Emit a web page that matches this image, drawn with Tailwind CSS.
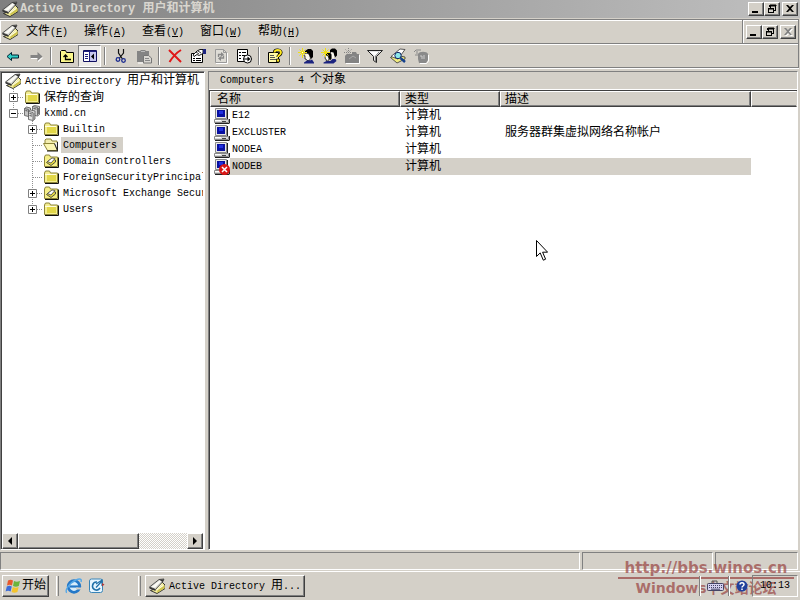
<!DOCTYPE html>
<html lang="zh-CN">
<head>
<meta charset="utf-8">
<meta name="viewport" content="width=device-width, initial-scale=1">
<title>Active Directory 用户和计算机</title>
<script src="https://cdn.jsdelivr.net/npm/@tailwindcss/browser@4"></script>
</head>
<body class="font-['Liberation_Mono','Noto_Sans_CJK_SC',monospace] text-[10px] leading-4 text-black bg-[#d4d0c8]">

<!-- Icon definitions -->
<svg class="hidden" aria-hidden="true">
  <symbol id="i-book" viewBox="0 0 16 16">
    <path d="M6 11L13 4l3 3v3.500L8 15.500 1.500 12.500z" fill="#f2ec9c" stroke="#222" stroke-width=".9"/>
    <path d="M8 15l7.500-4.700V7.500L8.500 12z" fill="#cfc550"/>
    <path d="M6.500 11.500l6-5M8 12l6-4.500" stroke="#fff" stroke-width=".8"/>
    <path d="M.5 9L10 1.500l5-.5-1.500 3-7 7.500z" fill="#d6d6d0" stroke="#444" stroke-width=".9"/>
    <path d="M2.500 8.700L10.500 2.500l2 .5L6 9.800z" fill="#fbfbf6"/>
    <path d="M.5 9l6 2.500v1.500L.5 10.500z" fill="#333"/><path d="M10 1.500h5l-1.500 2.500z" fill="#333"/>
  </symbol>
  <symbol id="i-folder" viewBox="0 0 16 16">
    <path d="M1.500 4l1-2h4l1 2h7v9.500h-13z" fill="#f4ee90" stroke="#8c8438"/>
    <path d="M2 5.500h11" stroke="#fffde0"/><path d="M4 6h9v6H4z" fill="#e2d748"/>
    <path d="M15.500 4.500v10H2" fill="none" stroke="#111"/>
  </symbol>
  <symbol id="i-open" viewBox="0 0 16 16">
    <path d="M2 7V3l1-1h5l1 2h5v9" fill="#f4eeb0" stroke="#8c8438"/>
    <path d="M0.500 6.500h11l3 7h-10z" fill="#fbf6b4" stroke="#8c8438"/>
    <path d="M11.500 6.500l3 7V5" fill="#eee" stroke="#222"/><path d="M4 14h11" stroke="#111"/>
  </symbol>
  <symbol id="i-ou" viewBox="0 0 16 16">
    <path d="M1.500 4l1-2h4l1 2h7v9.500h-13z" fill="#f6ef86" stroke="#8c8438"/>
    <path d="M15.500 4.500v10H2" fill="none" stroke="#111"/>
    <path d="M3.500 9.500L8 6l4.500 1v2L8 12.500z" fill="#e4d840" stroke="#444" stroke-width=".9"/>
    <path d="M4.500 8.500L9 5l3 .5L8 10z" fill="#fff" stroke="#444" stroke-width=".8"/>
  </symbol>
  <symbol id="i-domain" viewBox="0 0 16 16">
    <g stroke="#555" stroke-width=".8">
      <path d="M0.500 3.500l2-1.500 4 1v7l-2 1.500-4-1z" fill="#c4c4c4"/><path d="M0.500 3.500l4 1v7" fill="none"/>
      <path d="M8.500 1.500l2-1 5 1v8l-2 1.500-5-1z" fill="#d0d0d0"/><path d="M8.500 1.500l5 1v8" fill="none"/>
      <path d="M4.500 6.500l2-1.500 4.500 1v8l-2 1.500-4.500-1z" fill="#e2e2e2"/><path d="M4.500 6.500L9 7.500v8" fill="none"/>
    </g>
    <path d="M5.500 8.500l2.500.6M5.500 10.500l2.500.6M1.500 5.500l2 .5M9.500 3.500l3 .6" stroke="#333" stroke-width=".8"/>
    <path d="M14.500 3v6M10 8v6" stroke="#777"/>
  </symbol>
  <symbol id="i-pc" viewBox="0 0 16 16">
    <path d="M1.500 .5h11v10h-11z" fill="#e8e8e8" stroke="#8a8a8a"/>
    <path d="M3 2h8v7H3z" fill="#0810a0"/><path d="M5 3h4v3H5z" fill="#2030e0"/>
    <path d="M13.500 1v10" stroke="#222"/>
    <path d="M.5 11.500h14v3H.5z" fill="#d8d8d8" stroke="#8a8a8a"/><path d="M1 12.500h6" stroke="#fff"/>
    <path d="M15.500 11v4.500M1 15.500h14" stroke="#222" fill="none"/>
    <path d="M8 13.500h4" stroke="#444"/>
  </symbol>
  <symbol id="i-pcx" viewBox="0 0 16 16">
    <use href="#i-pc"/>
    <circle cx="10.500" cy="10.500" r="5.500" fill="#d81818"/><path d="M8 8l5 5M13 8l-5 5" stroke="#fff" stroke-width="1.500"/>
  </symbol>
  <symbol id="t-plus" viewBox="0 0 19 16">
    <path d="M9.500 0v16M10 8.500h9" stroke="#909090" stroke-dasharray="1 1"/>
    <path d="M5.500 4.500h8v8h-8z" fill="#fff" stroke="#808080"/><path d="M7 8.500h5M9.500 6v5" stroke="#000"/>
  </symbol>
  <symbol id="t-end" viewBox="0 0 19 16">
    <path d="M9.500 0v8M10 8.500h9" stroke="#909090" stroke-dasharray="1 1"/>
    <path d="M5.500 4.500h8v8h-8z" fill="#fff" stroke="#808080"/><path d="M7 8.500h5M9.500 6v5" stroke="#000"/>
  </symbol>
  <symbol id="t-minus" viewBox="0 0 19 16">
    <path d="M9.500 0v8M10 8.500h9" stroke="#909090" stroke-dasharray="1 1"/>
    <path d="M5.500 4.500h8v8h-8z" fill="#fff" stroke="#808080"/><path d="M7 8.500h5" stroke="#000"/>
  </symbol>
  <symbol id="t-line" viewBox="0 0 19 16"><path d="M9.500 0v16M10 8.500h9" stroke="#909090" stroke-dasharray="1 1"/></symbol>
  <symbol id="w-min" viewBox="0 0 12 10"><path d="M2 7h6v2H2z"/></symbol>
  <symbol id="w-restore" viewBox="0 0 12 10"><path d="M4 1.500h5M4.500 1v3M3.500 1v2M9.500 1v5M8 6.500h2M2 4.500h6M2 5h6M2.500 4v5M7.500 4v5M2 8.500h6M4 1h6v1H4z" fill="none" stroke="currentColor"/></symbol>
  <symbol id="w-close" viewBox="0 0 12 10"><path d="M2 1h2l2 2 2-2h2L7 4.500 10 8H8L6 6 4 8H2l3-3.500z"/></symbol>
</svg>

<div class="min-h-screen flex flex-col">

  <!-- Title bar -->
  <header class="h-[18px] flex items-center pl-0.5 pr-0.5 bg-linear-to-r from-[#808080] to-[#c0c0c0]">
    <svg class="size-4 shrink-0"><use href="#i-book"/></svg>
    <h1 class="flex-1 ml-0.5 text-[12px] font-bold text-[#d9d6cf] whitespace-pre">Active Directory 用户和计算机</h1>
    <div class="flex">
      <button aria-label="最小化" class="w-4 h-3.5 flex items-center justify-center bg-[#d4d0c8] border border-t-white border-l-white border-r-[#404040] border-b-[#404040] shadow-[inset_-1px_-1px_0_#808080]"><svg class="w-3 h-2.5"><use href="#w-min"/></svg></button>
      <button aria-label="还原" class="w-4 h-3.5 flex items-center justify-center bg-[#d4d0c8] border border-t-white border-l-white border-r-[#404040] border-b-[#404040] shadow-[inset_-1px_-1px_0_#808080]"><svg class="w-3 h-2.5"><use href="#w-restore"/></svg></button>
      <button aria-label="关闭" class="w-4 h-3.5 ml-0.5 flex items-center justify-center bg-[#d4d0c8] border border-t-white border-l-white border-r-[#404040] border-b-[#404040] shadow-[inset_-1px_-1px_0_#808080]"><svg class="w-3 h-2.5"><use href="#w-close"/></svg></button>
    </div>
  </header>

  <!-- Menu bar -->
  <div class="mt-px h-[25px] mr-px flex border-t border-b border-r border-[#808080] shadow-[inset_0_1px_0_#fff,inset_1px_0_0_#fff]">
    <nav class="flex-1 flex items-center pl-0.5">
      <svg class="size-4 shrink-0"><use href="#i-book"/></svg>
      <button class="w-[58px] pt-0.5 whitespace-nowrap"><span class="text-xs leading-4">文件</span>(<u>F</u>)</button>
      <button class="w-[58px] pt-0.5 whitespace-nowrap"><span class="text-xs leading-4">操作</span>(<u>A</u>)</button>
      <button class="w-[58px] pt-0.5 whitespace-nowrap"><span class="text-xs leading-4">查看</span>(<u>V</u>)</button>
      <button class="w-[58px] pt-0.5 whitespace-nowrap"><span class="text-xs leading-4">窗口</span>(<u>W</u>)</button>
      <button class="w-[58px] pt-0.5 whitespace-nowrap"><span class="text-xs leading-4">帮助</span>(<u>H</u>)</button>
    </nav>
    <div class="flex items-center border-l border-[#808080] shadow-[inset_1px_0_0_#fff] pl-[3px] pr-0.5">
      <button aria-label="最小化子窗口" class="w-4 h-3.5 flex items-center justify-center bg-[#d4d0c8] border border-t-white border-l-white border-r-[#404040] border-b-[#404040] shadow-[inset_-1px_-1px_0_#808080]"><svg class="w-3 h-2.5"><use href="#w-min"/></svg></button>
      <button aria-label="还原子窗口" class="w-4 h-3.5 flex items-center justify-center bg-[#d4d0c8] border border-t-white border-l-white border-r-[#404040] border-b-[#404040] shadow-[inset_-1px_-1px_0_#808080]"><svg class="w-3 h-2.5"><use href="#w-restore"/></svg></button>
      <button disabled aria-label="关闭子窗口" class="w-4 h-3.5 ml-0.5 flex items-center justify-center bg-[#d4d0c8] border border-t-white border-l-white border-r-[#404040] border-b-[#404040] shadow-[inset_-1px_-1px_0_#808080]"><svg class="w-3 h-2.5 fill-[#808080] drop-shadow-[1px_1px_0_#fff]"><use href="#w-close"/></svg></button>
    </div>
  </div>

  <!-- Toolbar -->
  <div class="h-6 mr-px flex items-center pl-px border-b border-r border-[#808080] shadow-[inset_0_1px_0_#fff,0_1px_0_#fff]">
    <button aria-label="后退" class="w-[23px] h-[22px] flex items-center justify-center"><svg class="size-4" viewBox="0 0 16 16"><path d="M2 8.500L6.500 4.500v2.500h7v3h-7v2.500z" fill="#30d0c8" stroke="#023"/></svg></button>
    <button aria-label="前进" class="w-[23px] h-[22px] flex items-center justify-center"><svg class="size-4" viewBox="0 0 16 16"><path d="M15.500 9.500L10 14v-3H3v-1h7z" fill="#fff"/><path d="M14.500 8.500L9.500 4v3h-7v3h7v3z" fill="#848484"/></svg></button>
    <span class="w-2 h-[18px] flex justify-center"><span class="w-0.5 border-l border-[#808080] bg-white"></span></span>
    <button aria-label="上一级" class="w-[23px] h-[22px] flex items-center justify-center"><svg class="size-4" viewBox="0 0 16 16"><path d="M1.500 14.500v-11l1-1h4l1 2h7v10z" fill="#fbf78c" stroke="#000"/><path d="M6.500 7v4.500H12M4.500 9L6.500 7l2 2" fill="none" stroke="#000" stroke-width="1.300"/></svg></button>
    <button aria-label="显示控制台树" aria-pressed="true" class="w-[23px] h-[22px] flex items-center justify-center bg-[#edebe8] border border-t-[#808080] border-l-[#808080] border-r-white border-b-white"><svg class="size-4" viewBox="0 0 16 16"><path d="M1.500 2.500h13v11h-13z" fill="#fff" stroke="#101060"/><path d="M2 3h12v1H2z" fill="#202080"/><path d="M8 4h6v9H8z" fill="#c6c6ee"/><path d="M7.500 3v10" stroke="#202080"/><path d="M3 6.500h3M3 8.500h3M3 10.500h3" stroke="#202080"/><path d="M12 5.500v6l-3-3z" fill="#000"/></svg></button>
    <span class="w-2 h-[18px] flex justify-center"><span class="w-0.5 border-l border-[#808080] bg-white"></span></span>
    <button aria-label="剪切" class="w-[23px] h-[22px] flex items-center justify-center"><svg class="size-4" viewBox="0 0 16 16"><path d="M5.500 1v4l4 6M10.500 1v4l-4 5" fill="none" stroke="#111" stroke-width="1.200"/><circle cx="5" cy="11.500" r="1.800" fill="none" stroke="#1c2c90" stroke-width="1.300"/><circle cx="10.500" cy="12.500" r="1.800" fill="none" stroke="#1c2c90" stroke-width="1.300"/></svg></button>
    <button aria-label="粘贴" class="w-[23px] h-[22px] flex items-center justify-center"><svg class="size-4" viewBox="0 0 16 16"><path d="M1 3h3l1-1h4l1 1h3v11H1z" fill="#848484"/><path d="M5 3.500h4" stroke="#bbb"/><path d="M7.500 7.500h5l3 2.500v5h-8z" fill="#d9d7d2" stroke="#777"/><path d="M9 10.500h4M9 12.500h5" stroke="#888"/><path d="M2 15h5" stroke="#fff"/></svg></button>
    <span class="w-2 h-[18px] flex justify-center"><span class="w-0.5 border-l border-[#808080] bg-white"></span></span>
    <button aria-label="删除" class="w-[23px] h-[22px] flex items-center justify-center"><svg class="size-4" viewBox="0 0 16 16"><path d="M2 2c3 3 7 7 12 12M14 2C9 5 5 10 2.500 14" fill="none" stroke="#e01818" stroke-width="2"/></svg></button>
    <button aria-label="属性" class="w-[23px] h-[22px] flex items-center justify-center"><svg class="size-4" viewBox="0 0 16 16"><path d="M1.500 5.500h11v9h-11z" fill="#fff" stroke="#000"/><path d="M3 10.500h2M6 10.500h5M3 12.500h2M6 12.500h5" stroke="#000"/><path d="M3 7l4-4 3-1.500h3v4l-4 2-2-1-3 2z" fill="#fff" stroke="#000" stroke-width=".9"/><path d="M6 4l3 2M8 3l3 2" stroke="#000" stroke-width=".8"/><path d="M13 1h3v5h-3z" fill="#1c2480"/></svg></button>
    <button aria-label="刷新" disabled class="w-[23px] h-[22px] flex items-center justify-center"><svg class="size-4" viewBox="0 0 16 16"><path d="M2.500 1.500h8l3 3v10h-11z" fill="#dedcd6" stroke="#999"/><path d="M10.500 1.500v3h3" fill="none" stroke="#999"/><path d="M5.500 9V6.500H9M10.500 7.500V10H7" fill="none" stroke="#888" stroke-width="1.300"/><path d="M8 4l3 2.500L8 9zM8 8v5l-3-2.500z" fill="#888"/><path d="M14.500 5v10.500H3" fill="none" stroke="#fff"/></svg></button>
    <button aria-label="导出列表" class="w-[23px] h-[22px] flex items-center justify-center"><svg class="size-4" viewBox="0 0 16 16"><path d="M1.500 1.500h10v12h-10z" fill="#fff" stroke="#000"/><path d="M3 4.500h2M6 4.500h4M3 7.500h2M6 7.500h4M3 10.500h2" stroke="#000"/><circle cx="11.500" cy="11" r="4" fill="#fff" stroke="#000"/><path d="M8 10.500h3.500V8.500l3 2.500-3 2.500v-2H8z" fill="#000"/></svg></button>
    <span class="w-2 h-[18px] flex justify-center"><span class="w-0.5 border-l border-[#808080] bg-white"></span></span>
    <button aria-label="帮助主题" class="w-[23px] h-[22px] flex items-center justify-center"><svg class="size-4" viewBox="0 0 16 16"><path d="M1.500 4.500h10v10h-10z" fill="#fff9a8" stroke="#000"/><path d="M3 7.500h4M3 9.500h5M3 11.500h6" stroke="#555"/><path d="M7.500 4.500C7.500 2.500 9 2 10.500 2s3.500.8 3.500 2.500c0 2.500-3 2.500-3 4.500" fill="none" stroke="#000" stroke-width="3.200"/><path d="M7.500 4.500C7.500 2.500 9 2 10.500 2s3.500.8 3.500 2.500c0 2.500-3 2.500-3 4.500" fill="none" stroke="#ffe81c" stroke-width="1.800"/><path d="M9.500 11h3v3h-3z" fill="#ffe81c" stroke="#000" stroke-width=".8"/></svg></button>
    <span class="w-2 h-[18px] flex justify-center"><span class="w-0.5 border-l border-[#808080] bg-white"></span></span>
    <button aria-label="新建用户" class="w-[23px] h-[22px] flex items-center justify-center"><svg class="size-4" viewBox="0 0 16 16"><path d="M7 3l3-2h3l2 2v6l-2 2-3-5-3-1z" fill="#000"/><path d="M7.500 5l3 .5 1 2 1 2.500-1 2.500H9l-1-1.500H7V8l-1-.5z" fill="#faf8ee" stroke="#000" stroke-width=".7"/><path d="M6 15.500v-1l3-2h3l2-1 2 3v1z" fill="#1c2480"/><path d="M4.500 0v10M0 4.500h9M1.500 1.500l6 6M7.500 1.500l-6 6" stroke="#f0e010"/><path d="M4 4h1v1H4z" fill="#fff"/></svg></button>
    <button aria-label="新建组" class="w-[23px] h-[22px] flex items-center justify-center"><svg class="size-4" viewBox="0 0 16 16"><path d="M9 2l2-1.500h3l2 2v5l-2 2-2-4-3-1z" fill="#000"/><path d="M10 4l2.500.5 1 4-1 2H11z" fill="#faf8ee"/><path d="M4 6l2-1.500h3l1.500 2v4l-1.500 2-2-4-3-1z" fill="#000"/><path d="M4.500 7l2.500.5 1 3.500-1 2H5.500l-.5-2-1-.5z" fill="#faf8ee" stroke="#000" stroke-width=".7"/><path d="M2.500 15.500v-1l3-1.500h4l2-2h3l1 2-3 2.500z" fill="#1c2480"/><path d="M4.500 0v9M0 4.500h9M1.500 1.500l6 6M7.500 1.500l-6 6" stroke="#f0e010"/></svg></button>
    <button aria-label="新建组织单位" disabled class="w-[23px] h-[22px] flex items-center justify-center"><svg class="size-4" viewBox="0 0 16 16"><path d="M3 6h5V4h4l1 2h2v9H1V8z" fill="#848484"/><path d="M4.500 0v9M0 4.500h8M1.500 1.500l6 6M7.500 1.500l-6 6" stroke="#848484" stroke-dasharray="1 1"/><path d="M5 11l4-3 3 2" fill="none" stroke="#aaa"/><path d="M15.500 7v8.500H2" fill="none" stroke="#fff"/></svg></button>
    <button aria-label="筛选器" class="w-[23px] h-[22px] flex items-center justify-center"><svg class="size-4" viewBox="0 0 16 16"><path d="M.5 2.500h15l-6 6v6l-3-2v-4z" fill="#e4e4e4" stroke="#222"/><path d="M3 4h9L8 8z" fill="#fff"/><path d="M12 4L8.500 8v5" fill="none" stroke="#888"/></svg></button>
    <button aria-label="查找" class="w-[23px] h-[22px] flex items-center justify-center"><svg class="size-4" viewBox="0 0 16 16"><path d="M0.500 9.500L5 7l10 2v2l-8 4z" fill="#f0ea80" stroke="#333" stroke-width=".8"/><path d="M1 8.500L10 1l5 .5L8 11z" fill="#fff" stroke="#333" stroke-width=".8"/><circle cx="8" cy="7.500" r="3.200" fill="#8ce8e8" stroke="#126"/><path d="M10.500 10l4.500 4" stroke="#14418c" stroke-width="2.500"/></svg></button>
    <button aria-label="添加到组" disabled class="w-[23px] h-[22px] flex items-center justify-center"><svg class="size-4" viewBox="0 0 16 16"><path d="M5 6c1-3 9-3 10 0v6l-2 3H6l-1-4z" fill="#8a8a8a"/><path d="M1 4l2-2h5M4 6V3M2 7h3" fill="none" stroke="#8a8a8a"/><path d="M7 8h2v3M11 7v4" fill="none" stroke="#ccc"/><path d="M15.500 7v6l-2 2.500H7" fill="none" stroke="#fff"/></svg></button>
  </div>

  <!-- Work area -->
  <main class="flex-1 flex mt-[3px] mr-0.5">
    <!-- Console tree -->
    <aside class="w-[205px] shrink-0 flex flex-col bg-white border border-t-[#808080] border-l-[#808080] border-r-white border-b-white shadow-[inset_1px_1px_0_#404040]">
      <div class="flex-1 ml-px mr-px mt-px overflow-hidden whitespace-nowrap leading-[14px]">
        <div class="h-4 flex items-center pl-[3px]"><svg class="size-4 shrink-0"><use href="#i-book"/></svg><span class="ml-0.5 px-0.5 pt-0.5 whitespace-pre">Active Directory <span class="text-xs leading-none">用户和计算机</span></span></div>
        <ul class="pl-0.5">
          <li class="h-4 flex items-center"><svg class="w-[19px] h-4 mr-px shrink-0"><use href="#t-plus"/></svg><svg class="size-4 shrink-0"><use href="#i-folder"/></svg><span class="ml-0.5 px-0.5 pt-0.5 text-xs leading-[14px]">保存的查询</span></li>
          <li>
            <div class="h-4 flex items-center"><svg class="w-[19px] h-4 mr-px shrink-0"><use href="#t-minus"/></svg><svg class="size-4 shrink-0"><use href="#i-domain"/></svg><span class="ml-0.5 px-0.5 pt-0.5">kxmd.cn</span></div>
            <ul class="pl-[19px]">
              <li class="h-4 flex items-center"><svg class="w-[19px] h-4 mr-px shrink-0"><use href="#t-plus"/></svg><svg class="size-4 shrink-0"><use href="#i-folder"/></svg><span class="ml-0.5 px-0.5 pt-0.5">Builtin</span></li>
              <li class="h-4 flex items-center"><svg class="w-[19px] h-4 mr-px shrink-0"><use href="#t-line"/></svg><svg class="size-4 shrink-0"><use href="#i-open"/></svg><span class="ml-0.5 pl-0.5 pr-1.5 pt-0.5 bg-[#d4d0c8]">Computers</span></li>
              <li class="h-4 flex items-center"><svg class="w-[19px] h-4 mr-px shrink-0"><use href="#t-line"/></svg><svg class="size-4 shrink-0"><use href="#i-ou"/></svg><span class="ml-0.5 px-0.5 pt-0.5">Domain Controllers</span></li>
              <li class="h-4 flex items-center"><svg class="w-[19px] h-4 mr-px shrink-0"><use href="#t-line"/></svg><svg class="size-4 shrink-0"><use href="#i-folder"/></svg><span class="ml-0.5 px-0.5 pt-0.5">ForeignSecurityPrincipals</span></li>
              <li class="h-4 flex items-center"><svg class="w-[19px] h-4 mr-px shrink-0"><use href="#t-plus"/></svg><svg class="size-4 shrink-0"><use href="#i-ou"/></svg><span class="ml-0.5 px-0.5 pt-0.5">Microsoft Exchange Security Groups</span></li>
              <li class="h-4 flex items-center"><svg class="w-[19px] h-4 mr-px shrink-0"><use href="#t-end"/></svg><svg class="size-4 shrink-0"><use href="#i-folder"/></svg><span class="ml-0.5 px-0.5 pt-0.5">Users</span></li>
            </ul>
          </li>
        </ul>
      </div>
      <!-- Horizontal scroll bar -->
      <div class="h-4 ml-px mr-px flex bg-[repeating-conic-gradient(#fff_0_25%,#d4d0c8_0_50%)] bg-[length:2px_2px]">
        <button aria-label="向左滚动" class="w-4 flex items-center justify-center bg-[#d4d0c8] border border-t-white border-l-white border-r-[#404040] border-b-[#404040] shadow-[inset_-1px_-1px_0_#808080]"><svg class="w-1 h-2" viewBox="0 0 4 8"><path d="M4 0v8L0 4z"/></svg></button>
        <div class="w-[121px] bg-[#d4d0c8] border border-t-white border-l-white border-r-[#404040] border-b-[#404040] shadow-[inset_-1px_-1px_0_#808080]"></div>
        <button aria-label="向右滚动" class="w-4 ml-auto flex items-center justify-center bg-[#d4d0c8] border border-t-white border-l-white border-r-[#404040] border-b-[#404040] shadow-[inset_-1px_-1px_0_#808080]"><svg class="w-1 h-2" viewBox="0 0 4 8"><path d="M0 0v8l4-4z"/></svg></button>
      </div>
    </aside>

    <!-- Result pane -->
    <section class="flex-1 min-w-0 ml-[3px] flex flex-col border border-t-[#808080] border-l-[#808080] border-r-white border-b-white">
      <div class="h-[18px] flex items-center pl-[11px] gap-6 border-b border-white"><span>Computers</span><span class="whitespace-pre">4 <span class="text-xs leading-4">个对象</span></span></div>
      <div class="flex-1 bg-white border-t border-l border-[#404040]">
        <table class="w-full table-fixed border-collapse text-left">
          <colgroup><col class="w-[190px]"><col class="w-[100px]"><col class="w-[251px]"><col></colgroup>
          <thead class="text-xs leading-4">
            <tr class="h-4">
              <th class="p-0 font-normal"><div class="h-4 pl-1.5 bg-[#d4d0c8] border border-t-white border-l-white border-r-[#404040] border-b-[#404040] shadow-[inset_-1px_-1px_0_#808080]">名称</div></th>
              <th class="p-0 font-normal"><div class="h-4 pl-1 bg-[#d4d0c8] border border-t-white border-l-white border-r-[#404040] border-b-[#404040] shadow-[inset_-1px_-1px_0_#808080]">类型</div></th>
              <th class="p-0 font-normal"><div class="h-4 pl-1 bg-[#d4d0c8] border border-t-white border-l-white border-r-[#404040] border-b-[#404040] shadow-[inset_-1px_-1px_0_#808080]">描述</div></th>
              <td class="p-0"><div class="h-4 bg-[#d4d0c8] border border-t-white border-l-white border-r-[#d4d0c8] border-b-[#404040] shadow-[inset_0_-1px_0_#808080]"></div></td>
            </tr>
          </thead>
          <tbody>
            <tr class="h-[17px]"><td class="p-0"><div class="h-[17px] flex items-center pl-1"><svg class="size-4 shrink-0"><use href="#i-pc"/></svg><span class="pl-0.5">E12</span></div></td><td class="p-0 pl-[5px] text-xs leading-4">计算机</td><td></td><td></td></tr>
            <tr class="h-[17px]"><td class="p-0"><div class="h-[17px] flex items-center pl-1"><svg class="size-4 shrink-0"><use href="#i-pc"/></svg><span class="pl-0.5">EXCLUSTER</span></div></td><td class="p-0 pl-[5px] text-xs leading-4">计算机</td><td class="p-0 pl-[5px] text-xs leading-4">服务器群集虚拟网络名称帐户</td><td></td></tr>
            <tr class="h-[17px]"><td class="p-0"><div class="h-[17px] flex items-center pl-1"><svg class="size-4 shrink-0"><use href="#i-pc"/></svg><span class="pl-0.5">NODEA</span></div></td><td class="p-0 pl-[5px] text-xs leading-4">计算机</td><td></td><td></td></tr>
            <tr class="h-[17px]"><td class="p-0"><div class="h-[17px] flex items-center pl-1"><svg class="size-4 shrink-0"><use href="#i-pcx"/></svg><span class="flex-1 pl-0.5 leading-[17px] bg-[#d4d0c8]">NODEB</span></div></td><td class="p-0 pl-[5px] text-xs leading-4 bg-[#d4d0c8]">计算机</td><td class="bg-[#d4d0c8]"></td><td></td></tr>
          </tbody>
        </table>
      </div>
    </section>
  </main>

  <!-- Status bar -->
  <div class="h-[18px] mt-0.5 pr-0.5 flex gap-0.5">
    <div class="flex-1 border border-t-[#808080] border-l-[#808080] border-r-white border-b-white"></div>
    <div class="w-[131px] border border-t-[#808080] border-l-[#808080] border-r-white border-b-white"></div>
    <div class="w-[83px] border border-t-[#808080] border-l-[#808080] border-r-white border-b-white"></div>
  </div>

  <!-- Taskbar -->
  <footer class="relative h-[29px] mt-px flex items-center pl-0.5 pr-0.5 border-t border-white">
    <button class="w-[47px] h-[22px] flex items-center justify-center gap-px bg-[#d4d0c8] border border-t-white border-l-white border-r-[#404040] border-b-[#404040] shadow-[inset_-1px_-1px_0_#808080] text-xs leading-4 whitespace-nowrap">
      <svg class="size-4 shrink-0" viewBox="0 0 16 16"><path d="M3 2.500c2-1 3-1 5 0L7 7.500c-2-1-3-1-5 0z" fill="#e8582c"/><path d="M9 3c2 1 3.500 1 6 0l-1.200 5c-2 1-4 1-5.800 0z" fill="#6cb43c"/><path d="M1.800 8.500c2-1 3-1 5 0l-1.200 5c-2-1-3-1-5 0z" fill="#3c6cd8"/><path d="M7.800 9c2 1 3.500 1 5.800 0l-1.200 5c-2 1-4 1-5.800 0z" fill="#f4c42c"/></svg><span>开始</span>
    </button>
    <span class="w-[3px] h-[20px] ml-[7px] border-l border-white border-r border-r-[#808080]"></span>
    <button aria-label="Internet Explorer" class="ml-1.5 size-[18px]"><svg class="size-[18px]" viewBox="0 0 18 18"><circle cx="9" cy="9.500" r="5.800" fill="#d8eefc" stroke="#2478c8" stroke-width="2.800"/><path d="M5 9.500h9" stroke="#2478c8" stroke-width="2.200"/><path d="M11 11.500h6v-1" stroke="#d4d0c8" stroke-width="1.800" fill="none"/><path d="M2 15.500C-1 15 4 6 11 3c4-2 6-1 5 2" fill="none" stroke="#54a8e8" stroke-width="1.400"/></svg></button>
    <button aria-label="Outlook Express" class="ml-[5px] size-[18px]"><svg class="size-[18px]" viewBox="0 0 18 18"><rect x="1.500" y="2" width="13" height="13.500" rx="2" fill="#e8f6ff" stroke="#3884b8"/><path d="M9 5a4 4 0 1 0 3 6" fill="none" stroke="#2070a8" stroke-width="1.600"/><path d="M8 7l6-4v6M8 10.500L14 4" fill="none" stroke="#2070a8" stroke-width="1.200"/><path d="M14 6l2.500 1.500L14 9.500" fill="#b03838"/></svg></button>
    <span class="w-[3px] h-[20px] ml-8 border-l border-white border-r border-r-[#808080]"></span>
    <button class="w-40 h-[22px] ml-1 flex items-center pl-[3px] gap-1 bg-[#d4d0c8] border border-t-white border-l-white border-r-[#404040] border-b-[#404040] shadow-[inset_-1px_-1px_0_#808080] whitespace-pre"><svg class="size-4 shrink-0"><use href="#i-book"/></svg><span>Active Directory <span class="text-xs leading-4">用</span>...</span></button>
    <!-- Forum watermark -->
    <div class="absolute right-1.5 bottom-[3px] w-44 text-center font-['DejaVu_Sans','Noto_Sans_CJK_SC',sans-serif] font-bold text-[#97413f]/70 whitespace-nowrap pointer-events-none">
      <div class="text-[15px] leading-[18px] border-b-2 border-[#97413f]/70">http://bbs.winos.cn</div>
      <div class="text-[14px] leading-[18px]">Windows中文站论坛</div>
    </div>
    <!-- Notification area -->
    <div class="relative ml-auto flex items-center">
      <span class="w-0.5 h-5 border-l border-[#808080] bg-white"></span>
      <svg class="w-[18px] h-4 ml-1.5" viewBox="0 0 18 16" role="img" aria-label="输入法"><path d="M5 5V3h5v2" fill="none" stroke="#555"/><rect x=".5" y="5.500" width="16" height="7" rx="1" fill="#d4d0ee" stroke="#446"/><path d="M2 7.500h13M2 9.500h13" stroke="#446" stroke-dasharray="1 1"/><path d="M4 11.200h9" stroke="#446"/></svg>
      <span class="w-0.5 h-5 ml-[3px] border-l border-[#808080] bg-white"></span>
      <svg class="size-3 ml-1.5 mr-1" viewBox="0 0 12 12" role="img" aria-label="帮助"><circle cx="6" cy="6" r="5.500" fill="#20409c"/><path d="M4 4.500c0-2.500 4-2.500 4 0C8 6 6 6 6 7.500M6 8.500v1.500" fill="none" stroke="#fff" stroke-width="1.500"/></svg>
      <time class="w-[46px] h-[22px] flex items-center justify-center border border-t-[#808080] border-l-[#808080] border-r-white border-b-white">10:13</time>
    </div>
  </footer>
</div>

<!-- Mouse pointer -->
<svg class="absolute left-[536px] top-[240px] w-3 h-[21px] pointer-events-none" viewBox="0 0 12 21" aria-hidden="true"><path d="M.5 .5v16l3.700-3.600 3.100 7.300 2.300-1-3-7h5z" fill="#fff" stroke="#000"/></svg>
</body>
</html>
